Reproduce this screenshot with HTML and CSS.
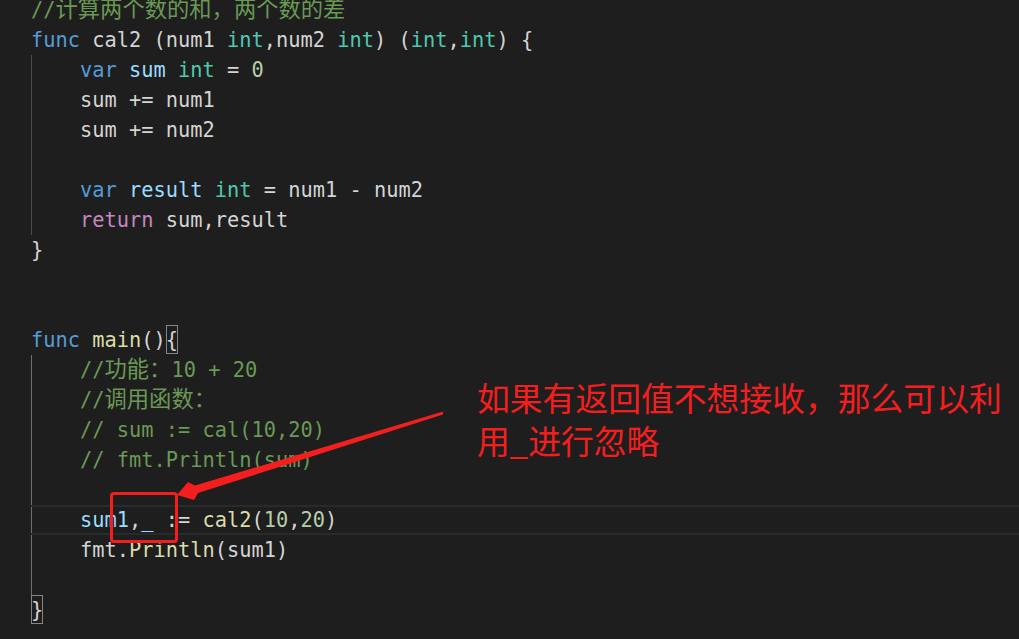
FILE: index.html
```html
<!DOCTYPE html>
<html lang="zh">
<head>
<meta charset="utf-8">
<title>Go 多返回值</title>
<link rel="stylesheet" href="styles.css">
</head>
<body>
<div class="editor">
  <div class="code">
    <div class="ln"><span class="cm">//<span class="cjk">计算两个数的和，两个数的差</span></span></div>
    <div class="ln"><span class="kw">func</span> <span class="tx">cal2</span> (num1 <span class="ty">int</span>,num2 <span class="ty">int</span>) (<span class="ty">int</span>,<span class="ty">int</span>) {</div>
    <div class="body g1">
      <div class="ln">    <span class="kw">var</span> <span class="vr">sum</span> <span class="ty">int</span> = <span class="nm">0</span></div>
      <div class="ln">    sum += num1</div>
      <div class="ln">    sum += num2</div>
      <div class="ln"> </div>
      <div class="ln">    <span class="kw">var</span> <span class="vr">result</span> <span class="ty">int</span> = num1 - num2</div>
      <div class="ln">    <span class="ctl">return</span> sum,result</div>
    </div>
    <div class="ln">}</div>
    <div class="ln"> </div>
    <div class="ln"> </div>
    <div class="ln"><span class="kw">func</span> <span class="fn">main</span>()<span class="bm">{</span></div>
    <div class="body g2">
      <div class="ln">    <span class="cm">//<span class="cjk">功能：</span>10 + 20</span></div>
      <div class="ln">    <span class="cm">//<span class="cjk">调用函数：</span></span></div>
      <div class="ln">    <span class="cm">// sum := cal(10,20)</span></div>
      <div class="ln">    <span class="cm">// fmt.Println(sum)</span></div>
      <div class="ln"> </div>
      <div class="ln cur">    <span class="vr">sum1</span>,<span class="vr">_</span> := <span class="fn">cal2</span>(<span class="nm">10</span>,<span class="nm">20</span>)</div>
      <div class="ln">    fmt.<span class="fn">Println</span>(sum1)</div>
      <div class="ln"> </div>
    </div>
    <div class="ln"><span class="bm">}</span></div>
  </div>

  <div class="note">如果有返回值不想接收，那么可以利<br>用_进行忽略</div>
  <div class="mark"></div>
  <svg class="arrow" width="1019" height="639" viewBox="0 0 1019 639" aria-hidden="true">
    <polygon points="177,495 188,482 195,485.5 443,411.5 443,414.5 198,493 194,500" fill="#f51e1e"/>
  </svg>
</div>
</body>
</html>
```

FILE: styles.css
```css
html, body {
  margin: 0;
  padding: 0;
  background: #1e1e1e;
  overflow: hidden;
}

.editor {
  position: relative;
  width: 1019px;
  height: 639px;
  overflow: hidden;
  background: #1e1e1e;
}

.code {
  margin-top: -5px;
  padding-left: 31px;
  font-family: "DejaVu Sans Mono", "Liberation Mono", monospace;
  font-size: 20.35px;
  line-height: 30px;
  color: #d4d4d4;
}

.ln {
  height: 30px;
  white-space: pre;
}

.body.g1 {
  box-shadow: inset 1px 0 0 #4a4a4a;
}

.body.g2 {
  box-shadow: inset 1px 0 0 #6e6e6e;
}

.cur {
  box-shadow: inset 0 2px 0 #2a2a2a, inset 0 -2px 0 #2a2a2a;
}

.cjk {
  font-family: "Noto Sans CJK SC", sans-serif;
  font-size: 22.3px;
  line-height: 1;
}

.cm { color: #6a9955; }
.kw { color: #569cd6; }
.ty { color: #4ec9b0; }
.vr { color: #9cdcfe; }
.nm { color: #b5cea8; }
.fn { color: #dcdcaa; }
.ctl { color: #c586c0; }
.tx { color: #d4d4d4; }

.bm {
  display: inline-block;
  height: 29px;
  vertical-align: top;
  box-shadow: inset 0 0 0 1px #858585;
}

.note {
  position: absolute;
  left: 477px;
  top: 375px;
  font-family: "Noto Sans CJK SC", sans-serif;
  font-size: 32.8px;
  line-height: 43px;
  color: #f51e1e;
  white-space: nowrap;
}

.mark {
  position: absolute;
  left: 110px;
  top: 492px;
  width: 68px;
  height: 51px;
  box-sizing: border-box;
  border: 3px solid #f51e1e;
  border-radius: 4px;
}

.arrow {
  position: absolute;
  left: 0;
  top: 0;
}
```
